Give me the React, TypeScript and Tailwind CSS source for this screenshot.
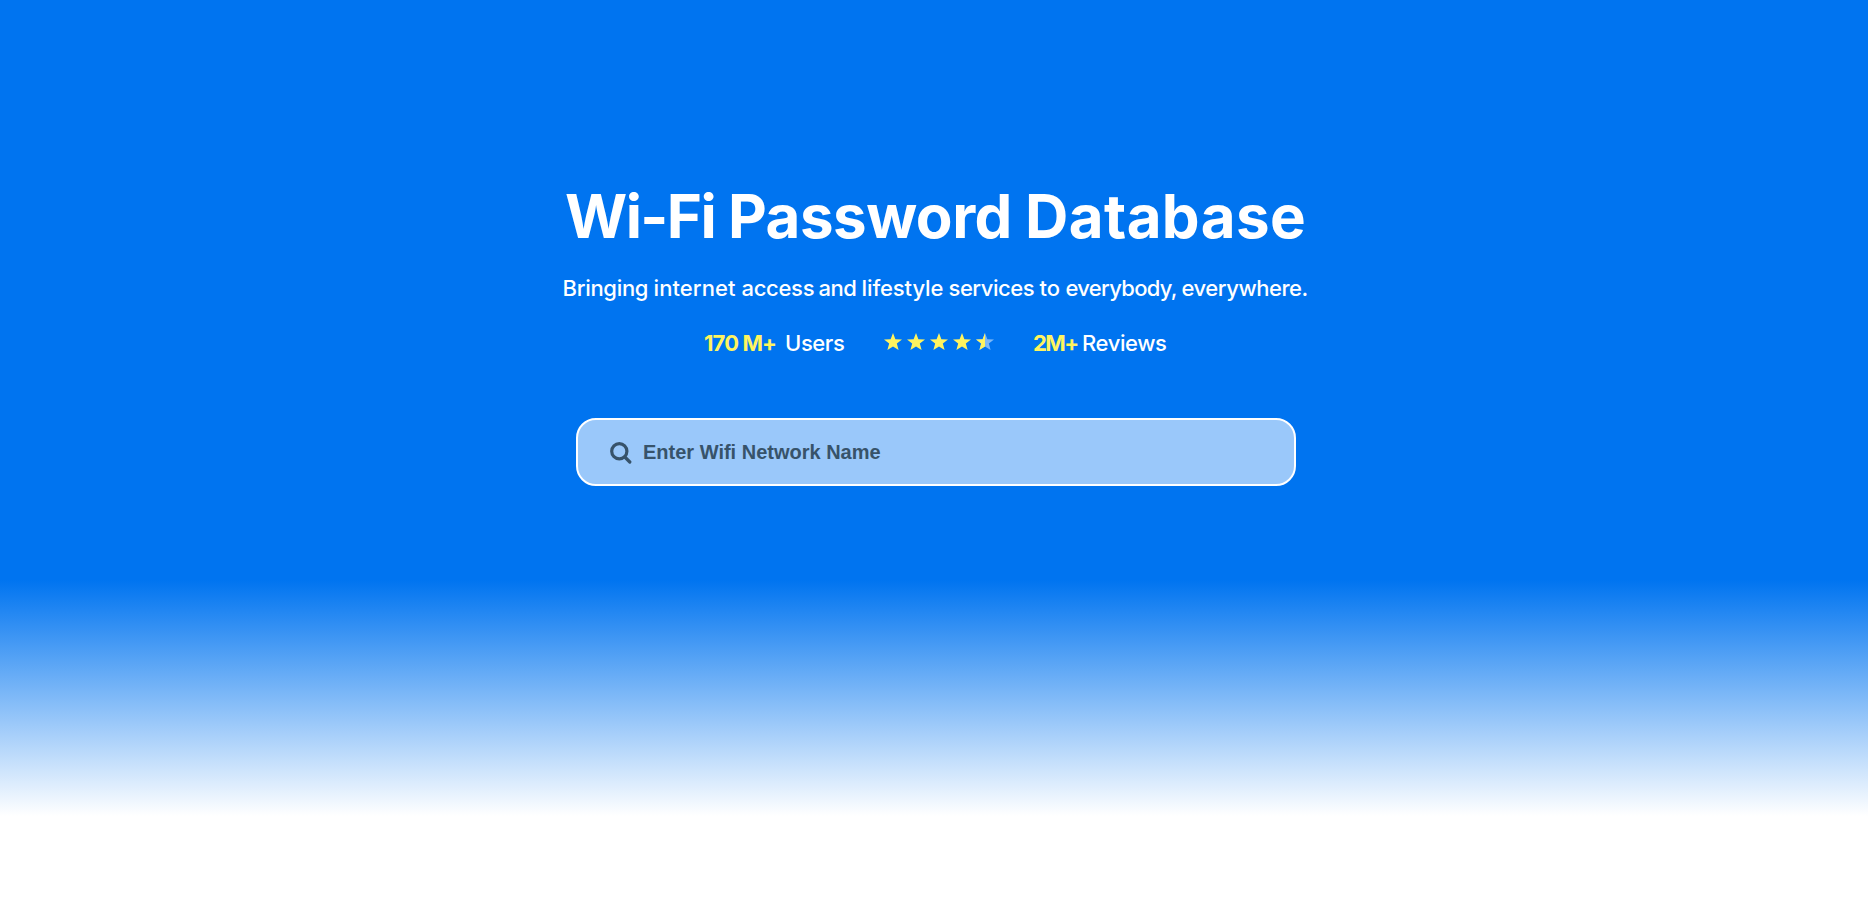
const STAR = "M12 1.5l2.8 7.4 7.8.3-6.1 4.9 2.1 7.6L12 17.4l-6.6 4.3 2.1-7.6-6.1-4.9 7.8-.3z";
const STAR_LEFT = "M12 1.5v15.9l-6.6 4.3 2.1-7.6-6.1-4.9 7.8-.3z";

function Star({ half = false }: { half?: boolean }) {
  return (
    <svg viewBox="1.4 1.5 21.2 20.2" preserveAspectRatio="none" className="h-[17px] w-[18px]">
      <path d={STAR} fill={half ? "#7db8f7" : "#fff45f"} />
      {half && <path d={STAR_LEFT} fill="#fff45f" />}
    </svg>
  );
}

export default function App() {
  return (
    <div className="flex h-[908px] w-full flex-col overflow-hidden bg-white font-[Inter,sans-serif]">
      <header className="flex h-[580px] shrink-0 flex-col items-center bg-[#0074f0] pt-[180px] pl-[4px] text-white">
        <h1 className="flex h-[72px] text-[60px] leading-[72px] font-bold whitespace-nowrap">
          <span className="w-[163px] tracking-[-1.6px]">Wi-Fi </span>
          <span className="w-[297px] tracking-[-0.5px]">Password </span>
          <span className="w-[282px] tracking-[0.4px]">Database</span>
        </h1>
        <p className="mt-[21px] flex h-[30px] text-[22px] leading-[30px] font-medium whitespace-nowrap">
          <span className="w-[91px] tracking-[-0.3px]">Bringing </span>
          <span className="w-[88px] tracking-[0.1px]">internet </span>
          <span className="w-[77px] tracking-[-0.3px]">access </span>
          <span className="w-[43px] tracking-[-0.5px]">and </span>
          <span className="w-[87px] tracking-[-0.1px]">lifestyle </span>
          <span className="w-[91px] tracking-[-0.45px]">services </span>
          <span className="w-[26px] tracking-[0px]">to </span>
          <span className="w-[116px] tracking-[-0.7px]">everybody, </span>
          <span className="w-[128px] tracking-[-0.45px]">everywhere.</span>
        </p>
        <div className="mt-[25px] flex h-[30px] w-[464px] items-center text-[22px] leading-[30px] font-medium tracking-[-0.4px] whitespace-nowrap">
          <div className="flex w-[180px]">
            <span className="w-[81px] font-bold tracking-[-0.9px] text-[#fff45f]">170 M+</span>
            <span>Users</span>
          </div>
          <div className="mb-[3px] flex w-[149px] gap-[5px]">
            <Star />
            <Star />
            <Star />
            <Star />
            <Star half />
          </div>
          <div className="flex">
            <span className="w-[49px] font-bold tracking-[-1.5px] text-[#fff45f]">2M+</span>
            <span>Reviews</span>
          </div>
        </div>
        <label className="mt-[60px] flex h-[68px] w-[720px] items-center rounded-[20px] border-2 border-white bg-[#9ac8fa] pl-[32px]">
          <svg viewBox="0 0 22 22" className="mt-[2px] h-[22px] w-[22px]" fill="none" stroke="#37536a" strokeWidth="3.2">
            <circle cx="9.3" cy="9.3" r="7.6" />
            <path d="M14.8 15l5 5" strokeLinecap="round" />
          </svg>
          <input
            className="ml-[11px] w-[600px] bg-transparent font-['Liberation_Sans',Arial,sans-serif] text-[20px] font-bold outline-none placeholder:text-[#37536a] placeholder:opacity-100"
            placeholder="Enter Wifi Network Name"
          />
        </label>
      </header>
      <div className="h-[236px] shrink-0 bg-linear-to-b/srgb from-[#0074f0] to-white" />
    </div>
  );
}
